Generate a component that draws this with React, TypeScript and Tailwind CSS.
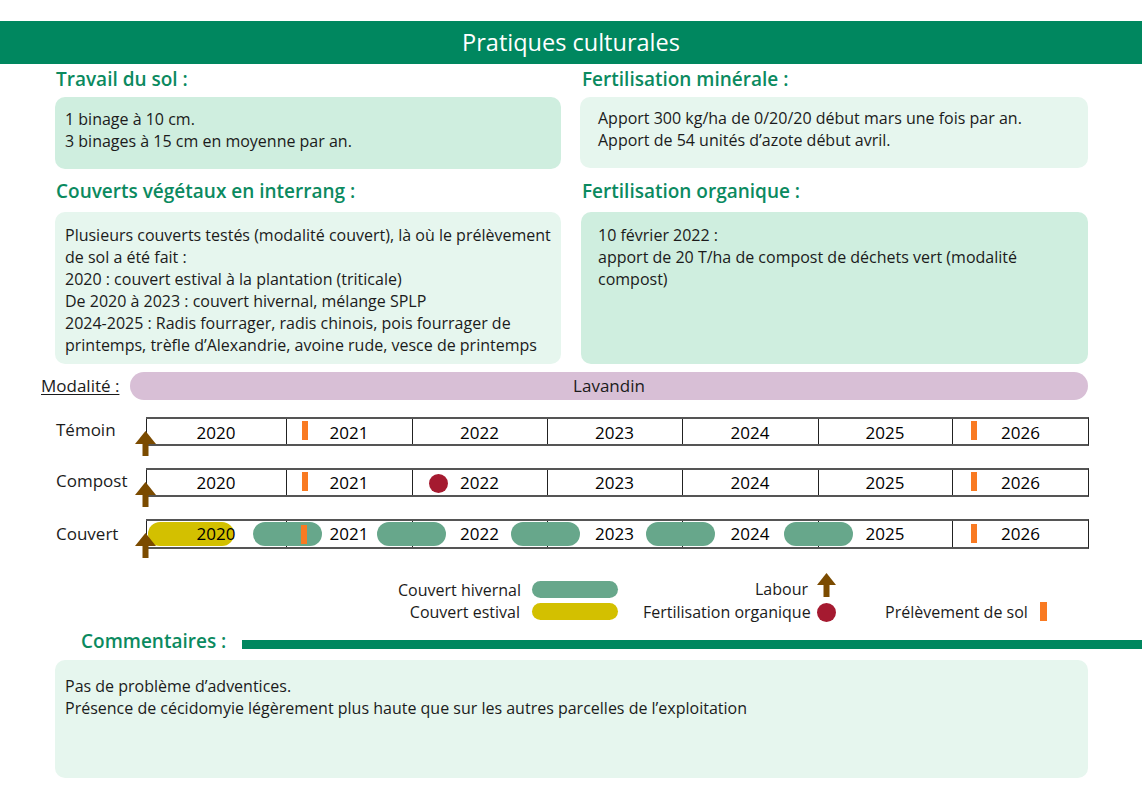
import React from "react";

function Arrow({ className }: { className: string }) {
  return (
    <svg className={className} viewBox="0 0 21 25" width="21" height="25">
      <polygon points="0,13 10.5,0 21,13" fill="#7B4B00" />
      <rect x="7.5" y="12" width="6" height="13" fill="#7B4B00" />
    </svg>
  );
}

const years = ["2020", "2021", "2022", "2023", "2024", "2025", "2026"];

function Cells() {
  return (
    <div className="absolute inset-0 grid grid-cols-[140px_126px_135px_135px_136px_134px_137px] border-y-2 border-[#555] border-r border-r-[#222]">
      {years.map((y) => (
        <div key={y} className="border-l border-[#222]" />
      ))}
    </div>
  );
}

function Texts() {
  return (
    <div className="relative z-[2] grid h-full grid-cols-[140px_126px_135px_135px_136px_134px_137px] text-[17px] font-medium text-black">
      {years.map((y) => (
        <div key={y} className="flex items-center justify-center pt-[1px]">
          {y}
        </div>
      ))}
    </div>
  );
}

function H({ children, className }: { children: React.ReactNode; className: string }) {
  return (
    <div className={"text-[19px] font-semibold leading-[26px] text-[#0B8A5F] " + className}>{children}</div>
  );
}

export default function App() {
  return (
    <div className="w-[1142px] h-[786px] overflow-hidden bg-white font-['Open_Sans',sans-serif] text-[#1b1b1b]">
      <div className="mt-[21px] flex h-[43px] items-center justify-center bg-[#00875F] text-[23.5px] text-white">
        Pratiques culturales
      </div>

      <div className="grid grid-cols-[506px_508px] gap-x-[19px] pl-[55px] pr-[54px] text-[16px] leading-[22px]">
        <div>
          <H className="mt-[2px] mb-[5px] pl-px">Travail du sol :</H>
          <div className="h-[72px] rounded-[10px] bg-[#CFEEDF] pl-[10px] pt-[11px]">
            <div>1 binage à 10 cm.</div>
            <div>3 binages à 15 cm en moyenne par an.</div>
          </div>
          <H className="mt-[9px] mb-[8px] pl-px">Couverts végétaux en interrang :</H>
          <div className="h-[152px] rounded-[10px] bg-[#E6F6EE] pl-[10px] pt-[12px] whitespace-nowrap">
            <div>Plusieurs couverts testés (modalité couvert), là où le prélèvement</div>
            <div>de sol a été fait :</div>
            <div>2020 : couvert estival à la plantation (triticale)</div>
            <div>De 2020 à 2023 : couvert hivernal, mélange SPLP</div>
            <div>2024-2025 : Radis fourrager, radis chinois, pois fourrager de</div>
            <div>printemps, trèfle d’Alexandrie, avoine rude, vesce de printemps</div>
          </div>
        </div>
        <div>
          <H className="mt-[2px] mb-[5px] pl-[2px]">Fertilisation minérale :</H>
          <div className="h-[71px] rounded-[10px] bg-[#E6F6EE] pl-[18px] pt-[10px]">
            <div>Apport 300 kg/ha de 0/20/20 début mars une fois par an.</div>
            <div>Apport de 54 unités d’azote début avril.</div>
          </div>
          <H className="mt-[10px] mb-[8px] pl-[2px]">Fertilisation organique :</H>
          <div className="ml-px h-[152px] rounded-[10px] bg-[#CFEEDF] pl-[17px] pt-[12px] whitespace-nowrap">
            <div>10 février 2022 :</div>
            <div>apport de 20 T/ha de compost de déchets vert (modalité</div>
            <div>compost)</div>
          </div>
        </div>
      </div>

      <div className="mt-[8px] flex items-center gap-[11px] pl-[41px] pr-[54px]">
        <div className="w-[78px] whitespace-nowrap text-[17px] underline underline-offset-2">Modalité :</div>
        <div className="flex h-[28px] flex-1 items-center justify-center rounded-full bg-[#D8BFD6] text-[17px]">
          Lavandin
        </div>
      </div>

      <div className="mt-[17px] pl-[56px]">
        <div className="flex items-center">
          <div className="w-[90px] pb-[4px] text-[17px]">Témoin</div>
          <div className="relative h-[29px] w-[943px]">
            <Cells />
            <Texts />
            <div className="absolute left-[156px] top-[4px] z-[3] h-[19px] w-[6px] bg-[#F97A22]" />
            <div className="absolute left-[825px] top-[4px] z-[3] h-[19px] w-[6px] bg-[#F97A22]" />
            <Arrow className="absolute left-[-11px] top-[14px] z-[4]" />
          </div>
        </div>
        <div className="mt-[21px] flex items-center">
          <div className="w-[90px] pb-[2px] text-[17px]">Compost</div>
          <div className="relative h-[29px] w-[943px]">
            <Cells />
            <Texts />
            <div className="absolute left-[156px] top-[4px] z-[3] h-[19px] w-[6px] bg-[#F97A22]" />
            <div className="absolute left-[283px] top-[6px] z-[3] h-[19px] w-[19px] rounded-full bg-[#A51A30]" />
            <div className="absolute left-[825px] top-[4px] z-[3] h-[19px] w-[6px] bg-[#F97A22]" />
            <Arrow className="absolute left-[-11px] top-[14px] z-[4]" />
          </div>
        </div>
        <div className="mt-[22px] flex items-center">
          <div className="w-[90px] text-[17px]">Couvert</div>
          <div className="relative h-[30px] w-[943px]">
            <Cells />
            <div className="absolute left-[2px] top-[3px] z-[1] h-[24px] w-[86px] rounded-full bg-[#D3C000]" />
            <div className="absolute left-[107px] top-[3px] z-[1] h-[24px] w-[69px] rounded-full bg-[#67A78B]" />
            <div className="absolute left-[231px] top-[3px] z-[1] h-[24px] w-[69px] rounded-full bg-[#67A78B]" />
            <div className="absolute left-[365px] top-[3px] z-[1] h-[24px] w-[69px] rounded-full bg-[#67A78B]" />
            <div className="absolute left-[500px] top-[3px] z-[1] h-[24px] w-[69px] rounded-full bg-[#67A78B]" />
            <div className="absolute left-[638px] top-[3px] z-[1] h-[24px] w-[69px] rounded-full bg-[#67A78B]" />
            <Texts />
            <div className="absolute left-[155px] top-[6px] z-[3] h-[19px] w-[6px] bg-[#F97A22]" />
            <div className="absolute left-[825px] top-[5px] z-[3] h-[19px] w-[6px] bg-[#F97A22]" />
            <Arrow className="absolute left-[-11px] top-[14px] z-[4]" />
          </div>
        </div>
      </div>

      <div className="mt-[24px] flex items-end pl-[398px] text-[16px] leading-[22px] whitespace-nowrap">
        <div className="grid grid-cols-[122px_86px] gap-x-[12px]">
          <div className="text-right">Couvert hivernal</div>
          <div className="flex items-center">
            <div className="h-[17px] w-[86px] rounded-full bg-[#67A78B]" />
          </div>
          <div className="text-right">Couvert estival</div>
          <div className="flex items-center">
            <div className="h-[17px] w-[86px] rounded-full bg-[#D3C000]" />
          </div>
        </div>
        <div className="ml-[25px] grid grid-cols-[165px_20px] gap-x-[8px]">
          <div className="flex items-end justify-end pb-[1px]">Labour</div>
          <div className="flex h-[28px] items-start justify-center">
            <svg viewBox="0 0 19 24" width="19" height="24">
              <polygon points="0,12 9.5,0 19,12" fill="#7B4B00" />
              <rect x="6.5" y="11" width="6" height="13" fill="#7B4B00" />
            </svg>
          </div>
          <div className="text-right">Fertilisation organique</div>
          <div className="flex items-center justify-center">
            <div className="mt-[2px] h-[19px] w-[19px] rounded-full bg-[#A51A30]" />
          </div>
        </div>
        <div className="ml-[49px] flex items-center gap-[12px]">
          <div>Prélèvement de sol</div>
          <div className="h-[19px] w-[7px] bg-[#F97A22]" />
        </div>
      </div>

      <div className="mt-[6px] flex h-[26px] items-center pl-[81px]">
        <div className="text-[19px] font-semibold text-[#0B8A5F]">Commentaires :</div>
        <div className="ml-[16px] mt-[6px] h-[9px] flex-1 bg-[#00875F]" />
      </div>

      <div className="ml-[55px] mt-[5px] h-[118px] w-[1033px] rounded-[10px] bg-[#E6F6EE] pl-[10px] pt-[15px] text-[16px] leading-[22px]">
        <div>Pas de problème d’adventices.</div>
        <div>Présence de cécidomyie légèrement plus haute que sur les autres parcelles de l’exploitation</div>
      </div>
    </div>
  );
}
